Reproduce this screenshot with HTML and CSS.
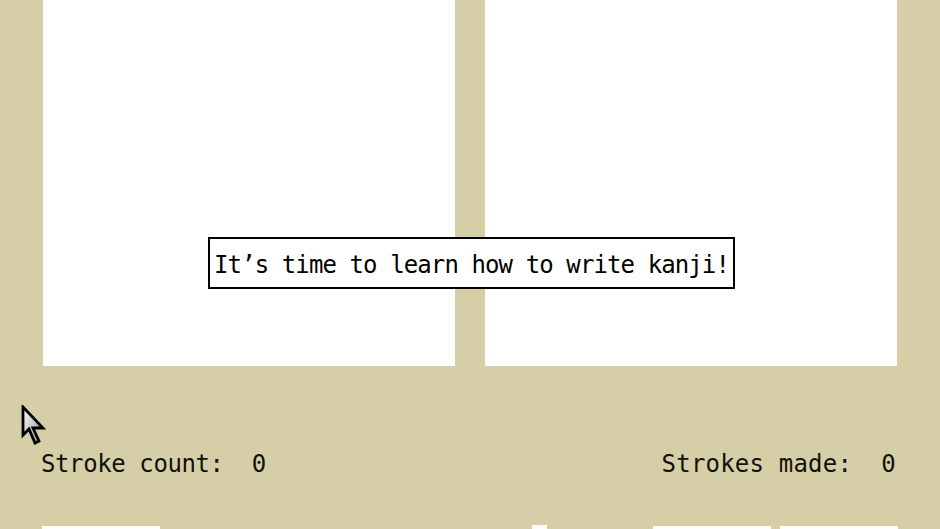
FILE: index.html
```html
<!DOCTYPE html>
<html lang="en">
<head>
    <meta charset="UTF-8">
    <title>Kanji</title>
    <link rel="stylesheet" href="styles.css">
</head>
<body>
    <div class="screen">
        <!-- 两块书写区 -->
        <div class="boards">
            <div class="board"></div>
            <div class="board"></div>
        </div>

        <!-- 笔画计数 -->
        <div class="status">
            <span>Stroke count:&nbsp; 0</span>
            <span class="made">Strokes made:&nbsp; 0</span>
        </div>

        <!-- 底部按钮 -->
        <div class="buttons">
            <div class="btn btn-a"></div>
            <div class="btn btn-b"></div>
            <div class="btn btn-c"></div>
            <div class="btn btn-d"></div>
        </div>

        <div class="message">It’s time to learn how to write kanji!</div>

        <svg class="pointer" width="28" height="44" viewBox="0 0 14 22">
            <defs>
                <linearGradient id="arrowFill" x1="0" y1="0" x2="1" y2="1">
                    <stop offset="0" stop-color="#ffffff"/>
                    <stop offset="1" stop-color="#8f8f8f"/>
                </linearGradient>
            </defs>
            <path d="M1 1 L1 15 L4 12 L7 19 L9 18 L6 11.5 L11 11.5 Z" fill="url(#arrowFill)" stroke="#000" stroke-width="1.4" stroke-linejoin="miter"/>
        </svg>
    </div>
</body>
</html>
```

FILE: styles.css
```css
* {
    margin: 0;
    padding: 0;
    box-sizing: border-box;
}

body {
    background: #d6cea6;
    font-family: 'DejaVu Sans Mono', 'Liberation Mono', monospace;
    overflow: hidden;
}

.screen {
    position: relative;
    width: 940px;
    height: 529px;
    overflow: hidden;
}

.boards {
    display: flex;
    gap: 30px;
    padding-left: 43px;
}

.board {
    width: 412px;
    height: 366px;
    background: #fff;
}

.status {
    display: flex;
    justify-content: space-between;
    margin-top: 84px;
    padding: 0 44px 0 41px;
    font-size: 24px;
    line-height: 28px;
    letter-spacing: -0.4px;
    color: #111;
    white-space: pre;
}

.status .made {
    letter-spacing: 0.2px;
}

.buttons {
    position: relative;
    height: 30px;
    margin-top: 48px;
}

.btn {
    position: absolute;
    top: 0;
    height: 30px;
    background: #fff;
}

.btn-a { left: 42px;  width: 118px; }
.btn-b { left: 532px; width: 15px; top: -1px; }
.btn-c { left: 653px; width: 118px; }
.btn-d { left: 780px; width: 118px; }

/* 提示框 */
.message {
    position: absolute;
    left: 208px;
    top: 237px;
    width: 527px;
    height: 52px;
    display: flex;
    align-items: center;
    justify-content: center;
    padding-top: 4px;
    background: #fff;
    border: 2px solid #000;
    font-size: 24px;
    letter-spacing: -0.9px;
    color: #000;
    white-space: nowrap;
}

.pointer {
    position: absolute;
    left: 21px;
    top: 405px;
}
```
